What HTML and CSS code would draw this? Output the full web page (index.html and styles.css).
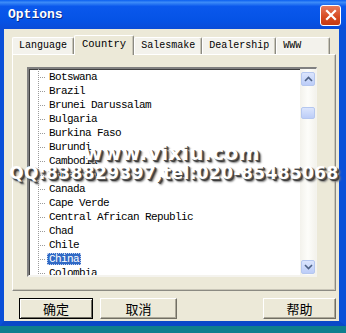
FILE: index.html
```html
<!DOCTYPE html>
<html lang="en">
<head>
    <meta charset="UTF-8">
    <title>Options</title>
    <link rel="stylesheet" href="styles.css">
</head>
<body>
    <div class="window">
        <div class="titlebar">
            <span class="title">Options</span>
            <button class="close-btn" aria-label="Close">
                <svg width="12" height="12" viewBox="0 0 12 12">
                    <path d="M2 2 L10 10 M10 2 L2 10" stroke="#fff" stroke-width="2.2" stroke-linecap="square"/>
                </svg>
            </button>
        </div>
        <div class="frame">
            <div class="client">
                <div class="tabs">
                    <div class="tab">Language</div>
                    <div class="tab active">Country</div>
                    <div class="tab">Salesmake</div>
                    <div class="tab">Dealership</div>
                    <div class="tab tab-wide">WWW</div>
                </div>
                <div class="panel">
                    <div class="tree-box">
                        <ul class="tree">
                            <li><span class="dots"></span><span class="label">Botswana</span></li>
                            <li><span class="dots"></span><span class="label">Brazil</span></li>
                            <li><span class="dots"></span><span class="label">Brunei Darussalam</span></li>
                            <li><span class="dots"></span><span class="label">Bulgaria</span></li>
                            <li><span class="dots"></span><span class="label">Burkina Faso</span></li>
                            <li><span class="dots"></span><span class="label">Burundi</span></li>
                            <li><span class="dots"></span><span class="label">Cambodia</span></li>
                            <li><span class="dots"></span><span class="label">Cameroon</span></li>
                            <li><span class="dots"></span><span class="label">Canada</span></li>
                            <li><span class="dots"></span><span class="label">Cape Verde</span></li>
                            <li><span class="dots"></span><span class="label">Central African Republic</span></li>
                            <li><span class="dots"></span><span class="label">Chad</span></li>
                            <li><span class="dots"></span><span class="label">Chile</span></li>
                            <li><span class="dots"></span><span class="label selected">China</span></li>
                            <li><span class="dots"></span><span class="label">Colombia</span></li>
                        </ul>
                        <div class="scrollbar">
                            <div class="sb-btn">
                                <svg width="9" height="6" viewBox="0 0 9 6"><path d="M1 5 L4.5 1.5 L8 5" fill="none" stroke="#4d6185" stroke-width="1.6"/></svg>
                            </div>
                            <div class="sb-thumb"></div>
                            <div class="sb-space"></div>
                            <div class="sb-btn">
                                <svg width="9" height="6" viewBox="0 0 9 6"><path d="M1 1 L4.5 4.5 L8 1" fill="none" stroke="#4d6185" stroke-width="1.6"/></svg>
                            </div>
                        </div>
                    </div>
                </div>
                <div class="buttons">
                    <button class="btn default">确定</button>
                    <button class="btn">取消</button>
                    <button class="btn help">帮助</button>
                </div>
            </div>
        </div>
    </div>

    <div class="watermark">
        <div class="wm-site">www.vixiu.com</div>
        <div class="wm-contact">QQ:838829397,tel:020-85485068</div>
    </div>
</body>
</html>
```

FILE: styles.css
```css
body {
    margin: 0;
    background-color: #0e7f8e;
    font-family: "Liberation Mono", monospace;
    position: relative;
    width: 346px;
    height: 333px;
    overflow: hidden;
}

.window {
    width: 346px;
}

.titlebar {
    height: 29px;
    display: flex;
    align-items: center;
    justify-content: space-between;
    padding: 0 5px 0 8px;
    box-sizing: border-box;
    background: linear-gradient(to bottom, #0a5ff0 0%, #3d8cf8 8%, #0a58ec 22%, #0553e6 70%, #0a4cd8 100%);
}

.title {
    color: #fff;
    font-weight: bold;
    font-size: 13px;
    text-shadow: 1px 1px 0 #0a2a8a;
}

.close-btn {
    width: 21px;
    height: 21px;
    padding: 0;
    border: 1px solid #fff;
    border-radius: 3px;
    background: linear-gradient(to bottom, #e87a5c, #d6491f 60%, #c53a12);
    display: flex;
    align-items: center;
    justify-content: center;
    margin-top: 1px;
}

.frame {
    border-left: 4px solid #0a4fd8;
    border-right: 7px solid #0a4fd8;
    border-bottom: 5px solid #0a48c8;
}

.client {
    background-color: #ece9d8;
    padding: 6px 3px 3px 8px;
    height: 292px;
    box-sizing: border-box;
}

/* tabs */
.tabs {
    display: flex;
    align-items: flex-end;
    height: 19px;
    position: relative;
    z-index: 1;
}

.tab {
    height: 16px;
    line-height: 16px;
    padding: 0 6px;
    font-size: 10px;
    color: #000;
    background-color: #f3f2ec;
    border-top: 1px solid #fff;
    border-left: 1px solid #fff;
    border-right: 1px solid #8b8a82;
    border-radius: 2px 2px 0 0;
    box-shadow: inset -1px 0 0 #c9c6b8;
}

.tab.active {
    height: 19px;
    line-height: 17px;
    padding: 0 7px;
    margin-bottom: -1px;
    background-color: #ece9d8;
    font-size: 10.5px;
}

.tab-wide {
    padding-right: 28px;
}

.panel {
    height: 210px;
    border-top: 1px solid #fff;
    border-left: 1px solid #fff;
    border-right: 1px solid #8b8a82;
    border-bottom: 1px solid #8b8a82;
    padding: 12px 18px 13px 14px;
    box-shadow: inset -1px -1px 0 #c9c6b8;
}

/* tree list */
.tree-box {
    display: flex;
    height: 206px;
    border-style: solid;
    border-width: 2px 1px 2px 2px;
    border-color: #808080 #f4f3ee #f4f3ee #808080;
    box-shadow: inset 1px 1px 0 #404040;
    background-color: #fff;
    overflow: hidden;
}

.tree {
    flex: 1;
    list-style: none;
    margin: 0;
    padding: 1px 0 0 9px;
    background-image: linear-gradient(to bottom, #9a9a9a 50%, transparent 50%);
    background-size: 1px 2px;
    background-repeat: repeat-y;
    background-position: 9px 0;
    font-size: 11px;
    letter-spacing: -0.6px;
}

.tree li {
    height: 14px;
    display: flex;
    align-items: center;
}

.dots {
    width: 8px;
    height: 1px;
    margin-right: 3px;
    background-image: linear-gradient(to right, #9a9a9a 50%, transparent 50%);
    background-size: 2px 1px;
}

.label {
    color: #000;
    white-space: nowrap;
    line-height: 12px;
}

.label.selected {
    background-color: #316ac5;
    color: #fff;
    margin-left: -2px;
    padding: 0 2px;
    outline: 1px dotted #c0d0f0;
    outline-offset: -1px;
}

/* scrollbar */
.scrollbar {
    width: 16px;
    display: flex;
    flex-direction: column;
    align-items: center;
    padding: 3px 0 1px;
    background: linear-gradient(to right, #f3f2ec, #fdfdfa 50%, #f3f2ec);
}

.sb-btn, .sb-thumb {
    width: 14px;
    box-sizing: border-box;
    border: 1px solid #b5c7ef;
    border-radius: 2px;
    background: linear-gradient(to bottom, #dbe5fd, #bccdf8);
}

.sb-btn {
    height: 14px;
    display: flex;
    align-items: center;
    justify-content: center;
}

.sb-thumb {
    height: 12px;
    margin-top: 21px;
}

.sb-space {
    flex: 1;
}

/* buttons */
.buttons {
    display: flex;
    gap: 7px;
    margin-top: 7px;
    padding-left: 7px;
}

.btn {
    height: 21px;
    width: 77px;
    padding: 0;
    font-family: "Noto Sans CJK SC", sans-serif;
    font-size: 13px;
    line-height: 17px;
    color: #000;
    background-color: #ece9d8;
    border-top: 1px solid #fff;
    border-left: 1px solid #fff;
    border-right: 1px solid #716f64;
    border-bottom: 1px solid #716f64;
    box-shadow: inset -1px -1px 0 #aca899;
}

.btn.default {
    width: 74px;
    border: 1px solid #000;
    box-shadow: inset 1px 1px 0 #fff, inset -1px -1px 0 #716f64;
}

.btn.help {
    margin-left: auto;
    width: 73px;
}

/* watermark over the dialog */
.watermark {
    position: absolute;
    top: 142px;
    left: 0;
    width: 346px;
    text-align: center;
    font-family: "DejaVu Sans", "Liberation Sans", sans-serif;
    font-weight: bold;
    color: #fff;
    text-shadow: 1px 1px 0 #555, 2px 2px 1px #333, 3px 3px 2px #888;
}

.wm-site {
    font-size: 20px;
    line-height: 22px;
    letter-spacing: 0.5px;
    padding-right: 2px;
}

.wm-contact {
    font-size: 17px;
    line-height: 19px;
    letter-spacing: 0.4px;
    padding-left: 2px;
}
```
